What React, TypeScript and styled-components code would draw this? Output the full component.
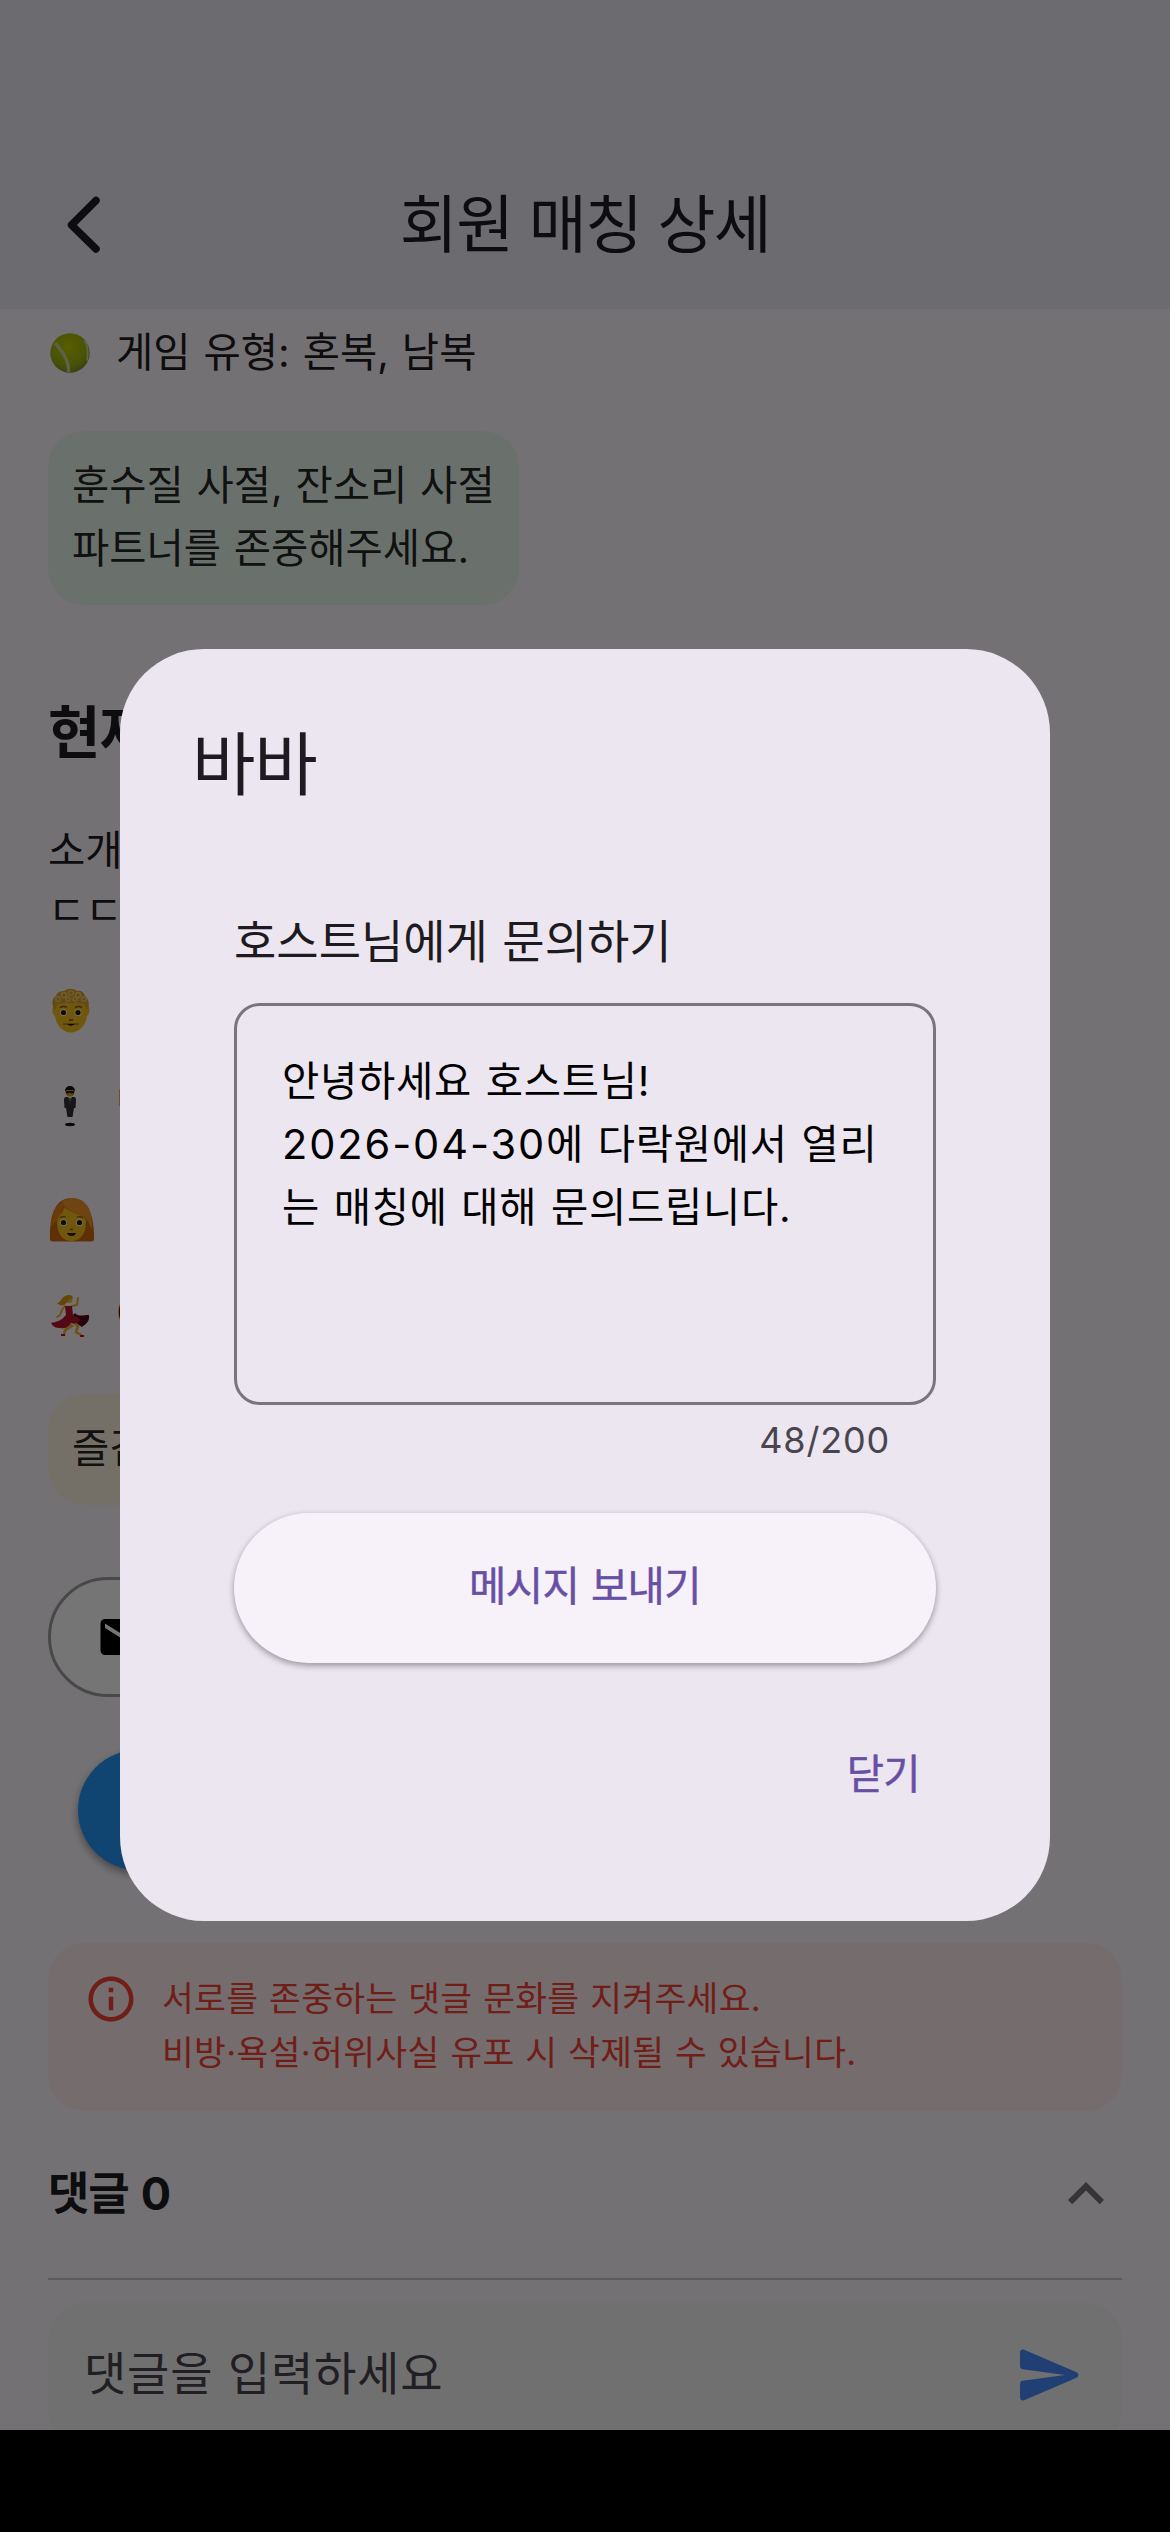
import React from "react";
import styled, { createGlobalStyle } from "styled-components";

const fontStack = `Inter, "Noto Sans CJK KR", sans-serif`;

const GlobalStyle = createGlobalStyle`
  * { box-sizing: border-box; }
  html, body { margin: 0; padding: 0; background: #000; }
  body { font-family: ${fontStack}; }
`;

const Page = styled.div`
  width: 1170px;
  height: 2532px;
  background: #000;
  overflow: hidden;
`;

const Screen = styled.div`
  position: relative;
  display: flex;
  flex-direction: column;
  height: 2430px;
  background: #fdf7fe;
  overflow: hidden;
`;

interface TextProps {
  $size: number;
  $line: number;
  $spacing?: number;
  $word?: number;
  $weight?: number;
  $stroke?: number;
  $color?: string;
}

const Text = styled.span<TextProps>`
  display: block;
  width: max-content;
  font-family: ${fontStack};
  font-size: ${(p) => p.$size}px;
  line-height: ${(p) => p.$line}px;
  letter-spacing: ${(p) => p.$spacing ?? 0}px;
  word-spacing: ${(p) => p.$word ?? 0}px;
  font-weight: ${(p) => p.$weight ?? 400};
  -webkit-text-stroke: ${(p) => p.$stroke ?? 0}px currentColor;
  color: ${(p) => p.$color ?? "#1d1b20"};
  white-space: pre;
`;

const Digits = styled.span`
  font-size: 41.5px;
  letter-spacing: 1.9px;
`;

const Header = styled.header`
  display: grid;
  grid-template-columns: 168px 1fr 168px;
  align-items: center;
  justify-items: center;
  height: 309px;
  padding: 139px 0 1px;
  background: #ece9f4;
  flex: none;
`;

const Body = styled.main`
  display: flex;
  flex-direction: column;
  padding: 14px 48px 0;
`;

const InfoRow = styled.div<{ $top?: number }>`
  display: flex;
  align-items: center;
  gap: 24px;
  height: 60px;
  margin-top: ${(p) => p.$top ?? 0}px;
`;

const EmojiBox = styled.span`
  display: flex;
  width: 44px;
  height: 44px;
  svg { width: 44px; height: 44px; overflow: visible; }
`;

const Note = styled.div<{ $bg: string }>`
  align-self: flex-start;
  margin-top: 48px;
  padding: 23px 24px 25px;
  border-radius: 36px;
  background: ${(p) => p.$bg};
`;

const SectionTitle = styled.h2`
  align-self: flex-start;
  margin: 86px 0 46px;
  font-weight: inherit;
`;

const Intro = styled.div`
  display: flex;
  flex-direction: column;
`;

const OutlineButton = styled.button`
  display: flex;
  align-items: center;
  gap: 24px;
  width: 520px;
  height: 120px;
  margin-top: 72px;
  padding: 0 45px;
  border: 3px solid #9e9e9e;
  border-radius: 60px;
  background: #fff;
`;

const PrimaryButton = styled.button`
  width: 540px;
  height: 120px;
  margin: 53px 30px 0;
  border: 0;
  border-radius: 60px;
  background: #2196f3;
  box-shadow: 0 4px 8px rgba(0, 0, 0, 0.4);
`;

const Warning = styled.section`
  display: flex;
  gap: 24px;
  height: 168px;
  margin-top: 73px;
  padding: 29px 36px;
  border-radius: 36px;
  background: #ffebee;
`;

const CommentHead = styled.div`
  display: flex;
  align-items: center;
  justify-content: space-between;
  height: 96px;
  margin-top: 35px;
`;

const Divider = styled.hr`
  width: 100%;
  height: 2px;
  margin: 36px 0 23px;
  border: 0;
  background: #cac4d0;
`;

const CommentInput = styled.div`
  display: flex;
  align-items: center;
  justify-content: space-between;
  height: 144px;
  padding: 0 36px;
  border-radius: 36px;
  background: #f3f4f3;
`;

const Placeholder = styled.div`
  padding-bottom: 5px;
`;

const Scrim = styled.div`
  position: absolute;
  inset: 0;
  display: flex;
  justify-content: center;
  align-items: flex-start;
  padding-top: 649px;
  background: rgba(0, 0, 0, 0.54);
`;

const Dialog = styled.div`
  display: flex;
  flex-direction: column;
  width: 930px;
  height: 1272px;
  padding: 68px 114px 0;
  border-radius: 84px;
  background: #ece6f0;
`;

const DialogTitle = styled.div`
  margin-left: -42px;
`;

const FieldLabel = styled.label`
  margin-top: 92px;
`;

const Field = styled.div`
  height: 402px;
  margin-top: 26px;
  padding: 44px 45px;
  border: 3px solid #79747e;
  border-radius: 26px;
`;

const Counter = styled.div`
  align-self: flex-end;
  margin: 11px 46px 0 0;
`;

const SendButton = styled.button`
  display: flex;
  align-items: center;
  justify-content: center;
  height: 150px;
  margin-top: 49px;
  padding: 0 0 3px;
  border: 0;
  border-radius: 75px;
  background: #f7f2fa;
  box-shadow: 0 3px 6px rgba(0, 0, 0, 0.28), 0 1px 6px rgba(0, 0, 0, 0.1);
`;

const CloseButton = styled.button`
  align-self: flex-end;
  margin: 82px 16px 0 0;
  padding: 0;
  border: 0;
  background: none;
`;

const BackIcon = () => (
  <svg width="72" height="72" viewBox="0 0 72 72" fill="none">
    <path d="M48 12.500 23.500 37 48 61" stroke="#1d1b20" strokeWidth="7.500" strokeLinecap="round" strokeLinejoin="round" />
  </svg>
);

const TennisBall = () => (
  <svg viewBox="0 0 44 44">
    <defs>
      <radialGradient id="ball" cx="45%" cy="35%" r="65%">
        <stop offset="0" stopColor="#c0cc00" />
        <stop offset="0.7" stopColor="#a0b414" />
        <stop offset="1" stopColor="#7d9420" />
      </radialGradient>
    </defs>
    <circle cx="22" cy="22" r="19.700" fill="url(#ball)" />
    <path d="M7.500 12C11 17 13 19 16 24S21 33 20.500 41" fill="none" stroke="#c9d69c" strokeWidth="3.400" />
    <path d="M36.500 8.500c3 6 4 13 2.500 21" fill="none" stroke="#d0dc98" strokeWidth="1.800" />
  </svg>
);

const ManFace = () => (
  <svg viewBox="0 0 44 44">
    <path d="M5.500 18C4 20 4 27 7 28c1 9 8 16.500 16 16.500S38 37 39 28c3-1 3-8 1.500-10L38 11H8z" fill="#f2bd1f" />
    <path d="M7 22c-4-5-3-12 1-14 1-4 5-5 8-5 4-3 9-3 13 0 4-1 7 1 8 5 4 3 5 9 2 14l-2-6c-4-1-6 0-9-2-4 2-7 2-10 0-3 2-6 1-9 2z" fill="#d8a02c" />
    <g fill="none" stroke="#f4cf6a" strokeWidth="1.300">
      <circle cx="10" cy="11" r="2.300" /><circle cx="16" cy="7" r="2.500" /><circle cx="23" cy="5" r="2.300" />
      <circle cx="30" cy="7" r="2.500" /><circle cx="20" cy="11" r="2.100" /><circle cx="27" cy="11" r="2.100" /><circle cx="36" cy="11" r="2.300" />
    </g>
    <circle cx="15.500" cy="24.500" r="3.500" fill="#fff3c8" /><circle cx="30" cy="24.500" r="3.500" fill="#fff3c8" />
    <circle cx="15.500" cy="24.500" r="2.600" fill="#2b1606" /><circle cx="30" cy="24.500" r="2.600" fill="#2b1606" />
    <path d="M12 19.500q4-2 7 0M27 19.500q4-2 7 0M21 31.500q2 1.300 4 0" fill="none" stroke="#8d560e" strokeWidth="1.500" />
    <path d="M15 36h16" stroke="#9c650e" strokeWidth="1.200" /><path d="M19 36h8q-4 3.500-8 0z" fill="#20100a" />
  </svg>
);

const SuitMan = () => (
  <svg viewBox="0 0 44 44">
    <ellipse cx="22" cy="7" rx="4.500" ry="4.500" fill="#dc951d" />
    <path d="M17 6.500c-.5-7.500 10.500-7.500 10 0L25.500 5h-7z" fill="#15120f" />
    <path d="M18 6h8v2.500h-3l-1-1-1 1h-3z" fill="#15201f" />
    <path d="M18 12h8q2 0 2 3l-.5 8H26l-1.500 9h-5L18 23h-1.500L16 15q0-3 2-3z" fill="#303038" />
    <path d="M20.300 12h3.400L22 19z" fill="#eee" /><path d="M22 13v5" stroke="#111" strokeWidth="1.200" />
    <path d="M20 33h1.500v2H20zM22.500 33H24v2h-1.500z" fill="#eee" /><ellipse cx="22" cy="39.500" rx="5" ry="1.700" fill="#111" />
  </svg>
);

const WomanFace = () => (
  <svg viewBox="0 0 44 44">
    <path d="M2 42C1 20 6 0 23.500 0S46.500 20 46 42q-1 1.500-5 1.500H7q-4 0-5-1.500z" fill="#cf6a0d" />
    <path d="M9 24c0 12 6 19 14.500 19S38 36 38 24c0-8-15-8-22-15-1 8-7 7-7 15z" fill="#f2bd1f" />
    <path d="M14 4c4 10 15 11 22 15 4 3 6 9 8 13C45 14 40 0 23.500 0 20 0 17 1 14 4z" fill="#ef952a" />
    <path d="M15 4C6 8 4 18 3 28c5-5 9-8 10-14 1-4 4-5 2-10z" fill="#e7841c" />
    <circle cx="15.500" cy="24.500" r="3.500" fill="#fff3c8" /><circle cx="31.500" cy="24.500" r="3.500" fill="#fff3c8" />
    <circle cx="15.500" cy="24.500" r="2.600" fill="#2b1606" /><circle cx="31.500" cy="24.500" r="2.600" fill="#2b1606" />
    <path d="M12 19.500q3-1.500 6-.5M29 19q3-1 6 .5M22 31q1.500 1 3 0" fill="none" stroke="#8d560e" strokeWidth="1.300" />
    <path d="M19 35h9q-1 3-4.500 3T19 35z" fill="#3b1208" />
  </svg>
);

const Dancer = () => (
  <svg viewBox="0 0 44 44">
    <path d="M17 12l-3 4-2 5-3 2M24 12l5-1 1-7" fill="none" stroke="#eab126" strokeWidth="2" strokeLinecap="round" />
    <path d="M27 19c3 4 8 2 14 2 1 6-3 9-7 12-5-3-9-6-9-12z" fill="#590819" />
    <path d="M18 28l6 4-7 4-1 5M24 27l6 5-2 6 5 3" fill="none" stroke="#eab126" strokeWidth="2.600" strokeLinecap="round" />
    <path d="M17 12h7l1 9c3 3 6 2 7 5-2 4-6 4-9 3-3 5-7 6-11 5-4 0-7-1-9-5 5-1 10-2 15-8z" fill="#b8142e" />
    <circle cx="21" cy="5.500" r="3.500" fill="#f2bd1f" />
    <path d="M9 9c4 0 4-7 11-8 4 0 6 2 4 4-4-1-4 4-8 6-3 1-5 0-7-2z" fill="#d99a16" />
    <path d="M13 41h4M32 42h4" stroke="#c0142c" strokeWidth="2" />
  </svg>
);

const MailIcon = () => (
  <svg width="54" height="54" viewBox="0 0 24 24" fill="#000">
    <path d="M20 4H4c-1.100 0-1.990.9-1.990 2L2 18c0 1.100.9 2 2 2h16c1.100 0 2-.9 2-2V6c0-1.100-.9-2-2-2zm0 4l-8 5-8-5V6l8 5 8-5v2z" />
  </svg>
);

const InfoIcon = () => (
  <svg width="54" height="54" viewBox="0 0 24 24" fill="#f44336">
    <path d="M11 7h2v2h-2zm0 4h2v6h-2zm1-9C6.480 2 2 6.480 2 12s4.480 10 10 10 10-4.480 10-10S17.520 2 12 2zm0 18c-4.410 0-8-3.590-8-8s3.590-8 8-8 8 3.590 8 8-3.590 8-8 8z" />
  </svg>
);

const ExpandLessIcon = () => (
  <svg width="72" height="72" viewBox="0 0 24 24" fill="#757575">
    <path d="M12 8l-6 6 1.410 1.410L12 10.830l4.590 4.580L18 14z" />
  </svg>
);

const SendIcon = () => (
  <svg width="72" height="72" viewBox="0 0 24 24" fill="#448aff">
    <path d="M3.400 20.400l17.450-7.480c.81-.35.81-1.490 0-1.840L3.400 3.600c-.66-.29-1.390.2-1.390.91L2 9.120c0 .5.37.93.87.99L17 12 2.870 13.880c-.5.07-.87.5-.87 1l.01 4.610c0 .71.73 1.200 1.390.91z" />
  </svg>
);

const noteText = { $size: 40.5, $line: 63, $spacing: 0, $word: 1.4, $color: "rgba(0,0,0,0.87)" };
const bodyText = { $size: 40.5, $line: 60, $spacing: 0, $word: 1.6 };
const actionText = { $size: 40.5, $line: 60, $spacing: -0.6, $word: 1, $stroke: 0.5, $color: "#6750a4" };

const members = [
  { icon: <ManFace />, label: "", top: 39 },
  { icon: <SuitMan />, label: "담", top: 37 },
  { icon: <WomanFace />, label: "", top: 53 },
  { icon: <Dancer />, label: "여", top: 36 },
];

export default function App() {
  return (
    <Page>
      <GlobalStyle />
      <Screen>
        <Header>
          <BackIcon />
          <Text $size={63} $line={84} $spacing={-1.6}>회원 매칭 상세</Text>
        </Header>
        <Body>
          <InfoRow>
            <EmojiBox><TennisBall /></EmojiBox>
            <Text {...bodyText}>게임 유형: 혼복, 남복</Text>
          </InfoRow>
          <Note $bg="#e8f5e9">
            <Text {...noteText}>{"훈수질 사절, 잔소리 사절\n파트너를 존중해주세요."}</Text>
          </Note>
          <SectionTitle>
            <Text $size={57} $line={84} $spacing={-1} $weight={700}>현재</Text>
          </SectionTitle>
          <Intro>
            <Text {...bodyText}>소개</Text>
            <Text {...bodyText}>ㄷㄷ</Text>
          </Intro>
          {members.map((m, i) => (
            <InfoRow key={i} $top={m.top}>
              <EmojiBox>{m.icon}</EmojiBox>
              {m.label && <Text {...bodyText}>{m.label}</Text>}
            </InfoRow>
          ))}
          <Note $bg="#fff3e0">
            <Text {...noteText}>즐겁</Text>
          </Note>
          <OutlineButton><MailIcon /></OutlineButton>
          <PrimaryButton />
          <Warning>
            <InfoIcon />
            <Text $size={34.5} $line={54} $spacing={0.38} $word={0.6} $color="#f44336">
              {"서로를 존중하는 댓글 문화를 지켜주세요.\n비방·욕설·허위사실 유포 시 삭제될 수 있습니다."}
            </Text>
          </Warning>
          <CommentHead>
            <Text $size={45} $line={72} $spacing={-1.2} $word={3} $weight={700}>댓글 0</Text>
            <ExpandLessIcon />
          </CommentHead>
          <Divider />
          <CommentInput>
            <Placeholder>
              <Text $size={46} $line={72} $spacing={0.75} $word={1} $color="#49454f">댓글을 입력하세요</Text>
            </Placeholder>
            <SendIcon />
          </CommentInput>
        </Body>
        <Scrim>
          <Dialog>
            <DialogTitle>
              <Text $size={69} $line={96} $spacing={-1.2}>바바</Text>
            </DialogTitle>
            <FieldLabel>
              <Text $size={46} $line={72} $spacing={0} $word={1.5}>호스트님에게 문의하기</Text>
            </FieldLabel>
            <Field>
              <Text $size={40.5} $line={63} $spacing={0.75} $word={1.5} $color="#000">
                {"안녕하세요 호스트님!\n"}
                <Digits>2026-04-30</Digits>
                {"에 다락원에서 열리\n는 매칭에 대해 문의드립니다."}
              </Text>
            </Field>
            <Counter>
              <Text $size={36} $line={48} $spacing={0.8} $color="#49454f">48/200</Text>
            </Counter>
            <SendButton>
              <Text {...actionText}>메시지 보내기</Text>
            </SendButton>
            <CloseButton>
              <Text {...actionText}>닫기</Text>
            </CloseButton>
          </Dialog>
        </Scrim>
      </Screen>
    </Page>
  );
}
